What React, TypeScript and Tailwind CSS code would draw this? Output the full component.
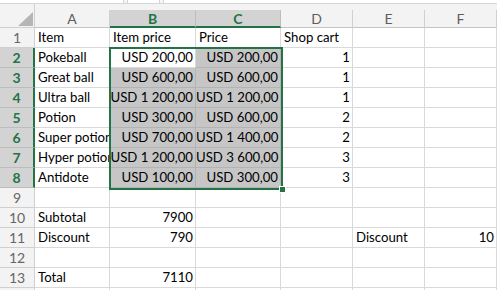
type Cell = string;

const rows: Cell[][] = [
  ["Item", "Item price", "Price", "Shop cart", "", ""],
  ["Pokeball", "USD 200,00", "USD 200,00", "1", "", ""],
  ["Great ball", "USD 600,00", "USD 600,00", "1", "", ""],
  ["Ultra ball", "USD 1 200,00", "USD 1 200,00", "1", "", ""],
  ["Potion", "USD 300,00", "USD 600,00", "2", "", ""],
  ["Super potion", "USD 700,00", "USD 1 400,00", "2", "", ""],
  ["Hyper potion", "USD 1 200,00", "USD 3 600,00", "3", "", ""],
  ["Antidote", "USD 100,00", "USD 300,00", "3", "", ""],
  ["", "", "", "", "", ""],
  ["Subtotal", "7900", "", "", "", ""],
  ["Discount", "790", "", "", "Discount", "10"],
  ["", "", "", "", "", ""],
  ["Total", "7110", "", "", "", ""],
  ["", "", "", "", "", ""],
];

const cols = ["A", "B", "C", "D", "E", "F"];
const widths = ["w-[75px]", "w-[86px]", "w-[85px]", "w-[72px]", "w-[72px]", "w-[72px]"];

const isNum = (v: string) => v.startsWith("USD") || /^[0-9 ]+$/.test(v);

function DataCell({ v, r, c }: { v: string; r: number; c: number }) {
  const inSel = r >= 1 && r <= 7 && (c === 1 || c === 2);
  const active = r === 1 && c === 1;
  const bg = inSel && !active ? "bg-[#c6c6c6] border-[#b3b3b3]" : "bg-white border-[#d9d9d9]";
  return (
    <div
      className={`${widths[c]} shrink-0 h-5 border-r border-b ${bg} overflow-hidden whitespace-nowrap leading-[19px] text-[13.2px] text-black ${
        isNum(v) ? "text-right pr-[2px] pl-0" : "text-left pl-[3px]"
      }`}
    >
      {v}
    </div>
  );
}

export default function App() {
  return (
    <div className="w-[497px] h-[290px] overflow-hidden bg-white font-['Lato','Liberation_Sans',sans-serif]">
      <div className="h-[4px] bg-[#f5f5f5] border-b border-[#d6d6d6] flex gap-[3px]">
        <div className="w-[124px] bg-white border-r border-[#d6d6d6]" />
        <div className="w-[33px] bg-white border-x border-[#d6d6d6]" />
        <div className="flex-1 bg-white border-l border-[#d6d6d6]" />
      </div>
      <div className="relative">
        <div className="flex h-6 bg-[#f3f3f3]">
          <div className="w-[35px] shrink-0 border-r border-b border-[#d0d0d0] relative">
            <svg className="absolute left-[18px] top-[8px]" width="15" height="14" viewBox="0 0 15 14">
              <polygon points="15,0 15,14 0,14" fill="#b5b5b5" />
            </svg>
          </div>
          {cols.map((c, i) => {
            const sel = i === 1 || i === 2;
            return (
              <div key={c} className={`${widths[i]} shrink-0 flex items-end`}>
                <div
                  className={`w-full h-[18px] flex items-center justify-center text-[14px] border-r ${
                    sel
                      ? "bg-[#d3d3d3] border-[#bdbdbd] border-b-2 border-b-[#227447] text-[#227447] font-bold"
                      : "border-[#d0d0d0] border-b border-b-[#c4c4c4] text-[#5e5e5e]"
                  }`}
                >
                  {c}
                </div>
              </div>
            );
          })}
        </div>
        {rows.map((row, r) => {
          const sel = r >= 1 && r <= 7;
          return (
            <div key={r} className="flex">
              <div
                className={`w-[35px] shrink-0 h-5 border-b flex items-center justify-center text-[14px] ${
                  sel
                    ? "bg-[#d3d3d3] border-[#bdbdbd] border-r-2 border-r-[#227447] text-[#227447] font-bold"
                    : "bg-[#f3f3f3] border-[#d0d0d0] border-r border-r-[#d0d0d0] text-[#666666]"
                }`}
              >
                {r + 1}
              </div>
              {row.map((v, c) => (
                <DataCell key={c} v={v} r={r} c={c} />
              ))}
            </div>
          );
        })}
        <div className="absolute left-[109px] top-[43px] w-[174px] h-[143px] border-2 border-[#227447]">
          <div className="absolute right-[-5px] bottom-[-5px] w-[7px] h-[7px] bg-[#227447] border border-white" />
        </div>
      </div>
    </div>
  );
}
